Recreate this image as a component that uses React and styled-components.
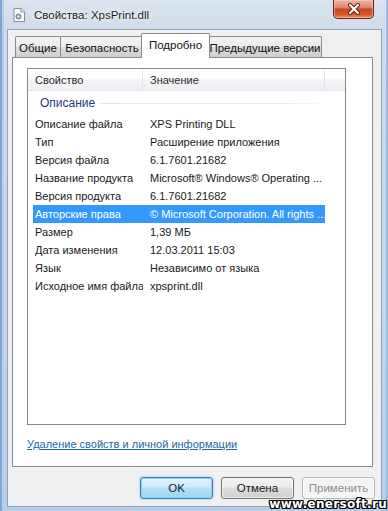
import React from 'react';
import styled, { createGlobalStyle } from 'styled-components';

const Global = createGlobalStyle`
  html, body { margin: 0; padding: 0; }
  body {
    width: 388px; height: 511px; overflow: hidden;
    font-family: "Liberation Sans", Arial, sans-serif;
    font-size: 11px; color: #1a1a1a;
  }
`;

const Window = styled.div`
  position: relative;
  width: 388px;
  height: 511px;
  box-sizing: border-box;
  display: flex;
  flex-direction: column;
  padding: 0 6px 4px 7px;
  background:
    linear-gradient(90deg, #7fa5d1 0 2px, #b8cfe9 2px 4px, transparent 4px),
    linear-gradient(270deg, #9dbbe0 0 2px, transparent 2px),
    linear-gradient(180deg, #dbe4ef 0, #d0dcea 28px, #c3d6ec 60%, #b7cde8 100%);
`;

const TitleBar = styled.div`
  height: 29px;
  display: flex;
  align-items: flex-start;
  flex: none;
`;

const TitleIcon = styled.svg`
  margin: 8px 0 0 6px;
  width: 12px;
  height: 14px;
  flex: none;
`;

const TitleText = styled.div`
  margin: 7px 0 0 9px;
  font-size: 11.5px;
  line-height: 16px;
  color: #1b1b1b;
  text-shadow: 0 0 6px #ffffff, 0 0 3px #ffffff;
`;

const CloseButton = styled.div`
  margin-left: auto;
  margin-right: 8px;
  width: 41px;
  height: 19px;
  box-sizing: border-box;
  border: 1px solid #5e2418;
  border-top: none;
  border-radius: 0 0 5px 5px;
  background: linear-gradient(180deg, #eeb3a6 0%, #e08a74 40%, #c9431f 52%, #d35a2a 80%, #e8935d 100%);
  box-shadow: inset 0 0 0 1px rgba(255, 220, 200, 0.5);
  display: flex;
  align-items: center;
  justify-content: center;
`;

const Client = styled.div`
  flex: 1;
  display: flex;
  flex-direction: column;
  background: #f0f0f0;
  border: 1px solid #8da4c0;
`;

const TabRow = styled.div`
  height: 27px;
  display: flex;
  align-items: flex-end;
  padding-left: 7px;
  flex: none;
`;

const Tab = styled.div`
  box-sizing: border-box;
  width: ${p => p.$w}px;
  height: ${p => (p.$active ? 25 : 21)}px;
  margin: ${p => (p.$active ? '0 -1px -1px -3px' : p.$first ? '0' : '0 0 0 -1px')};
  border: 1px solid #898c95;
  border-bottom: none;
  border-radius: 2px 2px 0 0;
  background: ${p => (p.$active ? '#ffffff' : 'linear-gradient(180deg, #f3f3f3 0%, #ebebeb 50%, #dddddd 51%, #cfcfcf 100%)')};
  position: relative;
  z-index: ${p => (p.$active ? 2 : 1)};
  display: flex;
  align-items: ${p => (p.$active ? 'flex-start' : 'center')};
  justify-content: center;
  padding-top: ${p => (p.$active ? '3px' : '1px')};
  font-size: 11.5px;
  line-height: 16px;
  color: #111;
  white-space: nowrap;
`;

const Panel = styled.div`
  box-sizing: border-box;
  height: 410px;
  margin: 0 8px 0 4px;
  border: 1px solid #898c95;
  background: #ffffff;
  padding: 10px 0 0 14px;
  display: flex;
  flex-direction: column;
  flex: none;
`;

const ListBox = styled.div`
  box-sizing: border-box;
  width: 319px;
  height: 357px;
  border: 1px solid #828790;
  background: #fff;
  display: flex;
  flex-direction: column;
`;

const Header = styled.div`
  display: grid;
  grid-template-columns: 115px 182px 1fr;
  height: 22px;
  box-sizing: border-box;
  border-bottom: 1px solid #e3e6eb;
  background: linear-gradient(180deg, #ffffff 0%, #ffffff 45%, #f4f5f7 46%, #eef0f3 100%);
`;

const HeaderCell = styled.div`
  display: flex;
  align-items: center;
  padding-left: 7px;
  border-right: 1px solid #e2e4e8;
  color: #2a2a2a;
  &:last-child { border-right: none; }
`;

const GroupHeader = styled.div`
  height: 24px;
  display: flex;
  align-items: center;
  padding-left: 12px;
  color: #1e3a8a;
  font-size: 12px;
`;

const GroupLine = styled.div`
  flex: 1;
  height: 1px;
  margin: 1px 11px 0 5px;
  background: linear-gradient(90deg, #e2e8f1 0%, #e8edf3 80%, #ffffff 100%);
`;

const Row = styled.div`
  display: grid;
  grid-template-columns: 110px 182px;
  width: 292px;
  height: 18px;
  margin-left: 5px;
  align-items: center;
  background: ${p => (p.$sel ? '#3399ff' : 'transparent')};
  color: ${p => (p.$sel ? '#ffffff' : '#1a1a1a')};
  white-space: nowrap;
`;

const Cell = styled.div`
  padding-left: ${p => (p.$value ? 7 : 2)}px;
  overflow: hidden;
`;

const LinkText = styled.a`
  margin-top: 11px;
  color: #1b6a9e;
  text-decoration: underline;
  line-height: 16px;
  cursor: pointer;
  align-self: flex-start;
`;

const ButtonRow = styled.div`
  display: flex;
  justify-content: flex-end;
  gap: 8px;
  padding: 10px 6px 0 0;
`;

const Button = styled.div`
  box-sizing: border-box;
  width: 73px;
  height: 22px;
  border-radius: 3px;
  display: flex;
  align-items: center;
  justify-content: center;
  font-size: 11.5px;
  border: 1px solid ${p => (p.$variant === 'default' ? '#3c7fb1' : p.$variant === 'disabled' ? '#b5b8bb' : '#707070')};
  color: ${p => (p.$variant === 'disabled' ? '#8d8d8d' : '#1a1a1a')};
  background: ${p =>
    p.$variant === 'default'
      ? 'linear-gradient(180deg, #e3f4fd 0%, #cdebfb 45%, #b3e0f9 50%, #9dd5f3 100%)'
      : p.$variant === 'disabled'
      ? '#f4f4f4'
      : 'linear-gradient(180deg, #f2f2f2 0%, #ebebeb 45%, #dddddd 50%, #cfcfcf 100%)'};
  box-shadow: ${p => (p.$variant === 'default' ? 'inset 0 0 0 1px #8fd0f3, 0 0 3px #8ccdf2' : 'inset 0 0 0 1px rgba(255,255,255,0.7)')};
`;

const Watermark = styled.div`
  position: absolute;
  right: 1px;
  bottom: 0px;
  font-family: "DejaVu Sans", sans-serif;
  font-weight: bold;
  font-size: 12px;
  line-height: 14px;
  color: #ffffff;
  letter-spacing: 0.3px;
  text-shadow:
    -1px -1px 0 #000, 1px -1px 0 #000, -1px 1px 0 #000, 1px 1px 0 #000,
    0 -1px 0 #000, 0 1px 0 #000, -1px 0 0 #000, 1px 0 0 #000;
`;

const rows = [
  ['Описание файла', 'XPS Printing DLL'],
  ['Тип', 'Расширение приложения'],
  ['Версия файла', '6.1.7601.21682'],
  ['Название продукта', 'Microsoft® Windows® Operating ...'],
  ['Версия продукта', '6.1.7601.21682'],
  ['Авторские права', '© Microsoft Corporation. All rights ...', true],
  ['Размер', '1,39 МБ'],
  ['Дата изменения', '12.03.2011 15:03'],
  ['Язык', 'Независимо от языка'],
  ['Исходное имя файла', 'xpsprint.dll'],
];

export default function App() {
  return (
    <>
      <Global />
      <Window>
        <TitleBar>
          <TitleIcon viewBox="0 0 12 14">
            <path d="M1 0.5 H8 L11.5 4 V13.5 H1 Z" fill="#ffffff" stroke="#8a8f96" strokeWidth="1" />
            <path d="M8 0.5 V4 H11.5" fill="#e8ecf0" stroke="#8a8f96" strokeWidth="1" />
            <circle cx="5.5" cy="8.5" r="2.6" fill="#9aa4ae" stroke="#6c757f" strokeWidth="0.8" />
            <circle cx="5.5" cy="8.5" r="1" fill="#ffffff" />
          </TitleIcon>
          <TitleText>Свойства: XpsPrint.dll</TitleText>
          <CloseButton>
            <svg width="14" height="12" viewBox="0 0 14 12">
              <path d="M3 2 L11 10 M11 2 L3 10" stroke="#5a1d10" strokeWidth="4" strokeLinecap="round" />
              <path d="M3 2 L11 10 M11 2 L3 10" stroke="#ffffff" strokeWidth="2.2" strokeLinecap="round" />
            </svg>
          </CloseButton>
        </TitleBar>
        <Client>
          <TabRow>
            <Tab $first $w={46}>Общие</Tab>
            <Tab $w={84}>Безопасность</Tab>
            <Tab $active $w={69}>Подробно</Tab>
            <Tab $w={114}>Предыдущие версии</Tab>
          </TabRow>
          <Panel>
            <ListBox>
              <Header>
                <HeaderCell>Свойство</HeaderCell>
                <HeaderCell>Значение</HeaderCell>
                <HeaderCell />
              </Header>
              <GroupHeader>
                Описание
                <GroupLine />
              </GroupHeader>
              {rows.map(([k, v, sel]) => (
                <Row key={k} $sel={sel}>
                  <Cell>{k}</Cell>
                  <Cell $value>{v}</Cell>
                </Row>
              ))}
            </ListBox>
            <LinkText>Удаление свойств и личной информации</LinkText>
          </Panel>
          <ButtonRow>
            <Button $variant="default">OK</Button>
            <Button>Отмена</Button>
            <Button $variant="disabled">Применить</Button>
          </ButtonRow>
        </Client>
        <Watermark>www.enersoft.ru</Watermark>
      </Window>
    </>
  );
}
